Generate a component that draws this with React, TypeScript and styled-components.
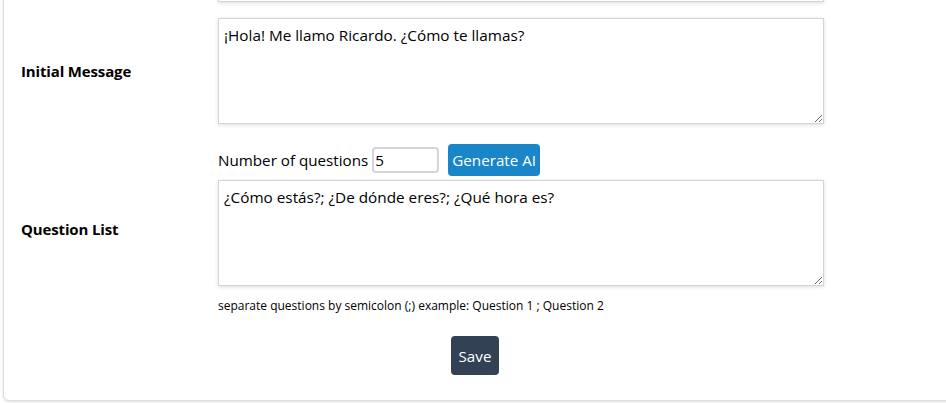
import React from "react";
import styled, { createGlobalStyle } from "styled-components";

const Global = createGlobalStyle`
  html, body { margin: 0; padding: 0; background: #ffffff; }
  body { font-family: "Open Sans", "Noto Sans", sans-serif; color: #000; overflow: hidden; }
  * { box-sizing: border-box; }
`;

const Viewport = styled.div`
  height: 403px;
  overflow: hidden;
`;

const Card = styled.section`
  margin: -105px 0 0 3px;
  width: 960px;
  background: #fff;
  border: 1px solid #dcdde2;
  border-radius: 6px;
  box-shadow: 0 1px 3px rgba(0, 0, 0, 0.12);
  padding: 0 0 25px 0;
`;

const Form = styled.div`
  display: flex;
  flex-direction: column;
`;

const Row = styled.div<{ $gap?: number }>`
  display: grid;
  grid-template-columns: 214px 606px;
  align-items: center;
  margin-top: ${(p) => p.$gap ?? 0}px;
`;

const Label = styled.label`
  padding-left: 17px;
  font-weight: 700;
  font-size: 15px;
  letter-spacing: -0.15px;
`;

const Field = styled.div`
  display: flex;
  flex-direction: column;
`;

const TextArea = styled.textarea`
  display: block;
  width: 606px;
  height: 106px;
  margin: 0;
  padding: 6px 5px;
  border: 1px solid #d3d4da;
  border-radius: 0;
  box-shadow: 0 1px 4px rgba(0, 0, 0, 0.14);
  font-family: "Open Sans", "Noto Sans", sans-serif;
  font-size: 15.3px;
  line-height: 21px;
  color: #000;
  resize: vertical;
  outline: none;
`;

const NumberRow = styled.div`
  display: flex;
  align-items: center;
  height: 32px;
  margin-bottom: 4px;
  font-size: 15.2px;
`;

const NumberInput = styled.input`
  width: 67px;
  height: 26px;
  margin: 0 9px 0 4px;
  padding: 0 1px;
  border: 2px solid #d2d5db;
  border-radius: 4px;
  font-family: "Open Sans", "Noto Sans", sans-serif;
  font-size: 15.3px;
  color: #000;
  outline: none;
`;

const Button = styled.button<{ $tone: "blue" | "slate" }>`
  border: none;
  border-radius: 4px;
  color: #fff;
  font-family: "Open Sans", "Noto Sans", sans-serif;
  font-size: 15.2px;
  cursor: pointer;
  background: ${(p) => (p.$tone === "blue" ? "#1a86c7" : "#334155")};
  height: ${(p) => (p.$tone === "blue" ? 32 : 39)}px;
  padding: ${(p) => (p.$tone === "blue" ? "0 4px" : "0 8px")};
`;

const Hint = styled.p`
  margin: 12px 0 0 0;
  font-size: 12px;
  line-height: 16px;
`;

const Actions = styled.div`
  display: flex;
  justify-content: center;
  width: 942px;
  margin-top: 22px;
`;

export default function App() {
  return (
    <Viewport>
      <Global />
      <Card>
        <Form>
          <Row>
            <span />
            <TextArea aria-label="Previous field" defaultValue="" />
          </Row>
          <Row $gap={16}>
            <Label>Initial Message</Label>
            <TextArea defaultValue="¡Hola! Me llamo Ricardo. ¿Cómo te llamas?" />
          </Row>
          <Row $gap={20}>
            <Label>Question List</Label>
            <Field>
              <NumberRow>
                Number of questions
                <NumberInput type="text" defaultValue="5" />
                <Button $tone="blue">Generate AI</Button>
              </NumberRow>
              <TextArea defaultValue="¿Cómo estás?; ¿De dónde eres?; ¿Qué hora es?" />
              <Hint>separate questions by semicolon (;) example: Question 1 ; Question 2</Hint>
            </Field>
          </Row>
          <Actions>
            <Button $tone="slate">Save</Button>
          </Actions>
        </Form>
      </Card>
    </Viewport>
  );
}
